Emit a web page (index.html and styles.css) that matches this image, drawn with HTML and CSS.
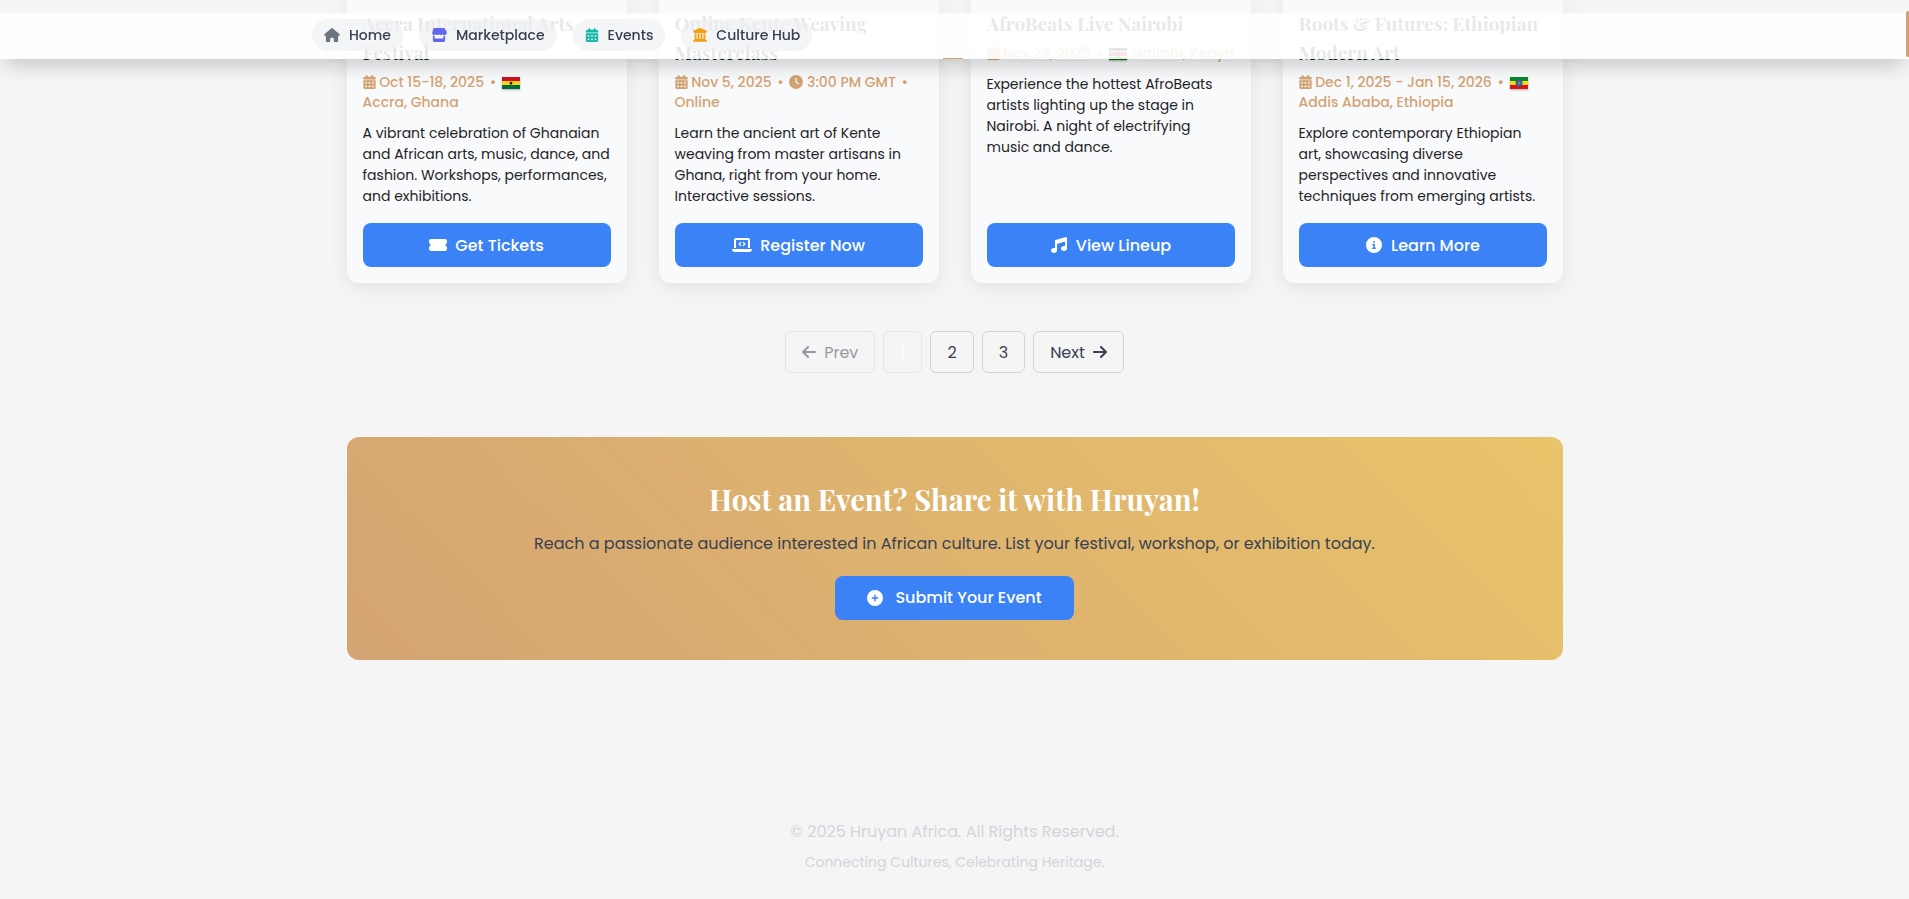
FILE: index.html
```html
<!DOCTYPE html>
<html lang="en">
<head>
    <meta charset="UTF-8">
    <meta name="viewport" content="width=device-width, initial-scale=1.0">
    <title>Events - Hruyan Africa</title>
    <link rel="stylesheet" href="styles.css">
</head>
<body>
    <svg class="sprite" aria-hidden="true">
        <symbol id="i-home" viewBox="0 0 576 512"><path d="M575.8 255.5c0 18-15 32.1-32 32.1h-32l.7 160.2c0 2.7-.2 5.4-.5 8.1V472c0 22.1-17.9 40-40 40H392c-22.1 0-40-17.9-40-40V384c0-17.7-14.3-32-32-32H256c-17.7 0-32 14.3-32 32v88c0 22.1-17.9 40-40 40H104c-22.1 0-40-17.9-40-40V287.6H32c-18 0-32-14-32-32.1c0-9 3-17 10-24L266.4 8c7-7 15-8 22-8s15 2 21 7L564.8 231.5c8 7 12 15 11 24z"/></symbol>
        <symbol id="i-store" viewBox="0 0 576 512"><path d="M110 0H466c11 0 21 6 27 15l67 106c34 54 4 130-60 138-46 6-79-30-79-30s-27 30-67 30-66-30-66-30-27 30-67 30-66-30-66-30-33 36-79 30C52 251 22 175 56 121L83 15C89 6 99 0 110 0z"/><path d="M64 280h64V384H448V280h64V448c0 35-29 64-64 64H128c-35 0-64-29-64-64z"/></symbol>
        <symbol id="i-calendar" viewBox="0 0 448 512"><path d="M128 0c17.7 0 32 14.3 32 32V64H288V32c0-17.7 14.3-32 32-32s32 14.3 32 32V64h48c26.5 0 48 21.5 48 48v48H0V112C0 85.5 21.5 64 48 64H96V32c0-17.7 14.3-32 32-32zM0 192H448V464c0 26.5-21.5 48-48 48H48c-26.5 0-48-21.5-48-48V192zm64 80v32c0 8.8 7.2 16 16 16h32c8.8 0 16-7.2 16-16V272c0-8.8-7.2-16-16-16H80c-8.8 0-16 7.2-16 16zm128 0v32c0 8.8 7.2 16 16 16h32c8.8 0 16-7.2 16-16V272c0-8.8-7.2-16-16-16H208c-8.8 0-16 7.2-16 16zm144-16c-8.8 0-16 7.2-16 16v32c0 8.8 7.2 16 16 16h32c8.8 0 16-7.2 16-16V272c0-8.8-7.2-16-16-16H336zM64 400v32c0 8.8 7.2 16 16 16h32c8.8 0 16-7.2 16-16V400c0-8.8-7.2-16-16-16H80c-8.8 0-16 7.2-16 16zm144-16c-8.8 0-16 7.2-16 16v32c0 8.8 7.2 16 16 16h32c8.8 0 16-7.2 16-16V400c0-8.8-7.2-16-16-16H208zm112 16v32c0 8.8 7.2 16 16 16h32c8.8 0 16-7.2 16-16V400c0-8.8-7.2-16-16-16H336c-8.8 0-16 7.2-16 16z"/></symbol>
        <symbol id="i-landmark" viewBox="0 0 512 512"><path d="M240 4c10-5 22-5 32 0L496 100c12 6 18 18 15 31s-14 21-27 21v8c0 13-11 24-24 24H52c-13 0-24-11-24-24v-8c-13 0-24-8-27-21s3-25 15-31zM64 200h64V400h40V200h64V400h48V200h64V400h40V200h64V412l48 32c12 8 19 22 15 36s-16 24-31 24H32c-15 0-27-10-31-24s3-28 15-36l48-32z"/></symbol>
        <symbol id="i-clock" viewBox="0 0 512 512"><path d="M256 0a256 256 0 1 1 0 512A256 256 0 1 1 256 0zM232 120V256c0 8 4 15.5 10.7 20l96 64c11 7.4 25.9 4.4 33.3-6.7s4.4-25.9-6.7-33.3L280 243.2V120c0-13.3-10.7-24-24-24s-24 10.7-24 24z"/></symbol>
        <symbol id="i-ticket" viewBox="0 0 576 512"><path d="M64 64C28.7 64 0 92.7 0 128v64c0 8.8 7.4 15.7 15.7 18.6C34.5 217.1 48 235 48 256s-13.5 38.9-32.3 45.4C7.4 304.3 0 311.2 0 320v64c0 35.3 28.7 64 64 64H512c35.3 0 64-28.7 64-64V320c0-8.8-7.4-15.7-15.7-18.6C541.5 294.9 528 277 528 256s13.5-38.9 32.3-45.4c8.3-2.9 15.7-9.8 15.7-18.6V128c0-35.3-28.7-64-64-64H64z"/></symbol>
        <symbol id="i-laptop" viewBox="0 0 640 512"><path d="M64 96c0-35.3 28.7-64 64-64H512c35.3 0 64 28.7 64 64V352H512V96H128V352H64zM0 403c0-10.6 8.6-19 19-19H621c10.6 0 19 8.6 19 19c0 42.4-34.4 77-77 77H77C34.4 480 0 445.6 0 403z"/><path d="M278 176l-48 48 48 48M362 176l48 48-48 48" fill="none" stroke="currentColor" stroke-width="42" stroke-linecap="round" stroke-linejoin="round"/></symbol>
        <symbol id="i-music" viewBox="0 0 512 512"><path d="M499.1 6.3c8.1 6 12.9 15.6 12.9 25.7v72V368c0 44.2-43 80-96 80s-96-35.8-96-80s43-80 96-80c11.2 0 22 1.6 32 4.6V147L192 223.8V432c0 44.2-43 80-96 80s-96-35.8-96-80s43-80 96-80c11.2 0 22 1.6 32 4.6V128c0-14.1 9.3-26.6 22.8-30.7l320-96c9.7-2.9 20.2-1.1 28.3 5z"/></symbol>
        <symbol id="i-info" viewBox="0 0 512 512"><path d="M256 512A256 256 0 1 0 256 0a256 256 0 1 0 0 512zM216 336h24V272H216c-13.3 0-24-10.7-24-24s10.7-24 24-24h48c13.3 0 24 10.7 24 24v88h8c13.3 0 24 10.7 24 24s-10.7 24-24 24H216c-13.3 0-24-10.7-24-24s10.7-24 24-24zm40-208a32 32 0 1 1 0 64 32 32 0 1 1 0-64z"/></symbol>
        <symbol id="i-plus" viewBox="0 0 512 512"><path d="M256 512A256 256 0 1 0 256 0a256 256 0 1 0 0 512zM232 344V280H168c-13.3 0-24-10.7-24-24s10.7-24 24-24h64V168c0-13.3 10.7-24 24-24s24 10.7 24 24v64h64c13.3 0 24 10.7 24 24s-10.7 24-24 24H280v64c0 13.3-10.7 24-24 24s-24-10.7-24-24z"/></symbol>
        <symbol id="i-left" viewBox="0 0 448 512"><path d="M9.4 233.4c-12.5 12.5-12.5 32.8 0 45.3l160 160c12.5 12.5 32.8 12.5 45.3 0s12.5-32.8 0-45.3L109.2 288 416 288c17.7 0 32-14.3 32-32s-14.3-32-32-32l-306.7 0L214.6 118.6c12.5-12.5 12.5-32.8 0-45.3s-32.8-12.5-45.3 0l-160 160z"/></symbol>
        <symbol id="i-right" viewBox="0 0 448 512"><path d="M438.6 278.6c12.5-12.5 12.5-32.8 0-45.3l-160-160c-12.5-12.5-32.8-12.5-45.3 0s-12.5 32.8 0 45.3L338.8 224 32 224c-17.7 0-32 14.3-32 32s14.3 32 32 32l306.7 0L233.4 393.4c-12.5 12.5-12.5 32.8 0 45.3s32.8 12.5 45.3 0l160-160z"/></symbol>
    </svg>

    <nav class="top-nav">
        <div class="nav-inner">
            <a href="#home" class="nav-link"><svg class="icon home"><use href="#i-home"/></svg>Home</a>
            <a href="#marketplace" class="nav-link"><svg class="icon market"><use href="#i-store"/></svg>Marketplace</a>
            <a href="#events" class="nav-link"><svg class="icon events"><use href="#i-calendar"/></svg>Events</a>
            <a href="#culture" class="nav-link"><svg class="icon culture"><use href="#i-landmark"/></svg>Culture Hub</a>
        </div>
        <span class="side-tab"></span>
    </nav>

    <main class="container">
        <section class="event-grid" id="events">
            <article class="event-card">
                <h3>Accra International Arts Festival</h3>
                <p class="meta">
                    <svg class="icon"><use href="#i-calendar"/></svg> Oct 15-18, 2025 <span class="dot">•</span>
                    <svg class="flag" viewBox="0 0 18 12"><path fill="#ce1126" d="M0 0h18v4H0z"/><path fill="#fcd116" d="M0 4h18v4H0z"/><path fill="#006b3f" d="M0 8h18v4H0z"/><path d="M9 4l.5 1.5H11L9.8 6.4l.5 1.5L9 7l-1.3.9.5-1.5L7 5.5h1.5z"/></svg>
                    <span class="place">Accra, Ghana</span>
                </p>
                <p class="desc">A vibrant celebration of Ghanaian and African arts, music, dance, and fashion. Workshops, performances, and exhibitions.</p>
                <button class="btn"><svg class="icon"><use href="#i-ticket"/></svg>Get Tickets</button>
            </article>
            <article class="event-card">
                <h3>Online Kente Weaving Masterclass</h3>
                <p class="meta">
                    <svg class="icon"><use href="#i-calendar"/></svg> Nov 5, 2025 <span class="dot">•</span>
                    <svg class="icon round"><use href="#i-clock"/></svg> 3:00 PM GMT <span class="dot">•</span>
                    <span class="place">Online</span>
                </p>
                <p class="desc">Learn the ancient art of Kente weaving from master artisans in Ghana, right from your home. Interactive sessions.</p>
                <button class="btn"><svg class="icon wide"><use href="#i-laptop"/></svg>Register Now</button>
            </article>
            <article class="event-card">
                <h3>AfroBeats Live Nairobi</h3>
                <p class="meta">
                    <svg class="icon"><use href="#i-calendar"/></svg> Nov 22, 2025 <span class="dot">•</span>
                    <svg class="flag" viewBox="0 0 18 12"><path d="M0 0h18v4H0z"/><path fill="#fff" d="M0 3h18v6H0z"/><path fill="#bb0000" d="M0 4h18v4H0z"/><path fill="#006600" d="M0 9h18v3H0z"/><ellipse cx="9" cy="6" rx="1.5" ry="3.5" fill="#700"/></svg>
                    <span class="place">Nairobi, Kenya</span>
                </p>
                <p class="desc">Experience the hottest AfroBeats artists lighting up the stage in Nairobi. A night of electrifying music and dance.</p>
                <button class="btn"><svg class="icon"><use href="#i-music"/></svg>View Lineup</button>
            </article>
            <article class="event-card">
                <h3>Roots &amp; Futures: Ethiopian Modern Art</h3>
                <p class="meta">
                    <svg class="icon"><use href="#i-calendar"/></svg> Dec 1, 2025 - Jan 15, 2026 <span class="dot">•</span>
                    <svg class="flag" viewBox="0 0 18 12"><path fill="#078930" d="M0 0h18v4H0z"/><path fill="#fcdd09" d="M0 4h18v4H0z"/><path fill="#da121a" d="M0 8h18v4H0z"/><circle cx="9" cy="6" r="3.5" fill="#2f5f9e"/><path stroke="#b5b43c" stroke-width=".6" d="M9 4v4M7 6h4"/></svg>
                    <span class="place">Addis Ababa, Ethiopia</span>
                </p>
                <p class="desc">Explore contemporary Ethiopian art, showcasing diverse perspectives and innovative techniques from emerging artists.</p>
                <button class="btn"><svg class="icon"><use href="#i-info"/></svg>Learn More</button>
            </article>
        </section>

        <div class="pagination">
            <button class="page-btn" disabled><svg class="icon"><use href="#i-left"/></svg>Prev</button>
            <button class="page-btn current" disabled>1</button>
            <button class="page-btn">2</button>
            <button class="page-btn">3</button>
            <button class="page-btn">Next<svg class="icon"><use href="#i-right"/></svg></button>
        </div>

        <section class="host">
            <h2>Host an Event? Share it with Hruyan!</h2>
            <p>Reach a passionate audience interested in African culture. List your festival, workshop, or exhibition today.</p>
            <a href="#submit" class="btn submit"><svg class="icon"><use href="#i-plus"/></svg>Submit Your Event</a>
        </section>
    </main>

    <footer>
        <p>© 2025 Hruyan Africa. All Rights Reserved.</p>
        <p class="tagline">Connecting Cultures, Celebrating Heritage.</p>
    </footer>
</body>
</html>
```

FILE: styles.css
```css
* {
    box-sizing: border-box;
}
body {
    margin: 0;
    background-color: #f5f5f5;
    color: #1f2328;
    font-family: Poppins, Inter, sans-serif;
    font-size: 16px;
    line-height: 24px;
}
h2, h3, p {
    margin: 0;
}
h2, h3 {
    font-family: "Playfair Display", "Liberation Serif", serif;
    font-weight: bold;
}
.sprite {
    display: none;
}
.icon {
    width: 16px;
    height: 16px;
    fill: currentColor;
    flex-shrink: 0;
}

/* Navigation */
.top-nav {
    position: fixed;
    top: 11px;
    left: 0;
    right: 0;
    z-index: 10;
    padding: 8px 0;
    background: linear-gradient(rgba(255, 255, 255, 0), rgba(255, 255, 255, 0.9) 4px);
    box-shadow: 0 12px 20px -6px rgba(0, 0, 0, 0.2);
}
.top-nav::after {
    content: "";
    position: absolute;
    left: 50%;
    bottom: 0;
    width: 20px;
    height: 1px;
    margin-left: -12px;
    background-color: #d4a373;
}
.nav-inner {
    display: flex;
    gap: 16px;
    max-width: 1285px;
    margin: 0 auto;
}
.nav-link {
    display: flex;
    align-items: center;
    gap: 9px;
    height: 32px;
    padding: 0 12px;
    border-radius: 16px;
    background-color: rgba(236, 238, 241, 0.6);
    color: #374151;
    font-size: 14px;
    font-weight: 500;
    text-decoration: none;
}
.nav-link .icon {
    height: 14px;
}
.nav-link .events, .nav-link .culture {
    width: 14px;
}
.home { color: #6b7280; }
.market { color: #6366f1; }
.events { color: #14b8a6; }
.culture { color: #f59e0b; }
.side-tab {
    position: absolute;
    top: 0;
    right: 0;
    width: 3px;
    height: 46px;
    border-radius: 2px 0 0 2px;
    background-color: #d4a373;
}

/* Event cards */
.container {
    max-width: 1280px;
    margin: 0 auto;
    padding: 0 32px;
}
.event-grid {
    display: grid;
    grid-template-columns: repeat(4, 1fr);
    gap: 32px;
}
.event-card {
    display: flex;
    flex-direction: column;
    padding: 9px 16px 16px;
    border-radius: 0 0 12px 12px;
    background-color: #f9fafb;
    box-shadow: 0 4px 20px rgba(0, 0, 0, 0.08);
}
.event-card h3 {
    margin-bottom: 5px;
    color: #0f1f1f;
    font-size: 19px;
    line-height: 29px;
}
.meta {
    margin-bottom: 11px;
    color: #d4a373;
    font-size: 14px;
    font-weight: 500;
    line-height: 20px;
}
.meta .icon {
    width: 13px;
    height: 14px;
    vertical-align: -2px;
}
.meta .round {
    width: 14px;
}
.dot {
    margin: 0 2px;
}
.flag {
    width: 18px;
    height: 12px;
    margin-right: 2px;
    vertical-align: -2px;
    box-shadow: 0 1px 2px rgba(0, 0, 0, 0.3);
}
.place {
    display: inline-block;
}
.desc {
    margin-bottom: 16px;
    font-size: 14px;
    line-height: 21px;
}
.btn {
    display: flex;
    align-items: center;
    justify-content: center;
    gap: 8px;
    height: 44px;
    margin-top: auto;
    border: none;
    border-radius: 8px;
    background-color: #3b82f6;
    color: #fff;
    font-family: inherit;
    font-size: 16px;
    font-weight: 500;
    text-decoration: none;
    cursor: pointer;
}
.btn .icon {
    width: 18px;
}
.btn .wide {
    width: 20px;
}

/* Pagination */
.pagination {
    display: flex;
    justify-content: center;
    gap: 8px;
    margin: 48px 0 64px;
}
.page-btn {
    display: flex;
    align-items: center;
    gap: 8px;
    height: 42px;
    padding: 0 16px;
    border: 1px solid #d1d5db;
    border-radius: 6px;
    background: transparent;
    color: #374151;
    font-family: inherit;
    font-size: 16px;
}
.page-btn .icon {
    width: 14px;
}
.page-btn:disabled {
    opacity: 0.5;
}
.page-btn.current {
    border-color: #e5e7eb;
    color: #fff;
    opacity: 1;
}

/* Host an event */
.host {
    display: flex;
    flex-direction: column;
    align-items: center;
    padding: 40px;
    border-radius: 12px;
    background: linear-gradient(45deg, #d4a373, #e9c46a);
    color: #374151;
    text-align: center;
}
.host h2 {
    margin-bottom: 11px;
    color: #fff;
    font-size: 29px;
    line-height: 44px;
}
.host p {
    margin-bottom: 20px;
}
.submit {
    gap: 12px;
    padding: 0 32px;
}
.submit .icon {
    width: 16px;
}

footer {
    padding: 160px 0 23px;
    color: #d1d5db;
    text-align: center;
}
.tagline {
    margin-top: 8px;
    font-size: 14px;
    line-height: 20px;
}
```
